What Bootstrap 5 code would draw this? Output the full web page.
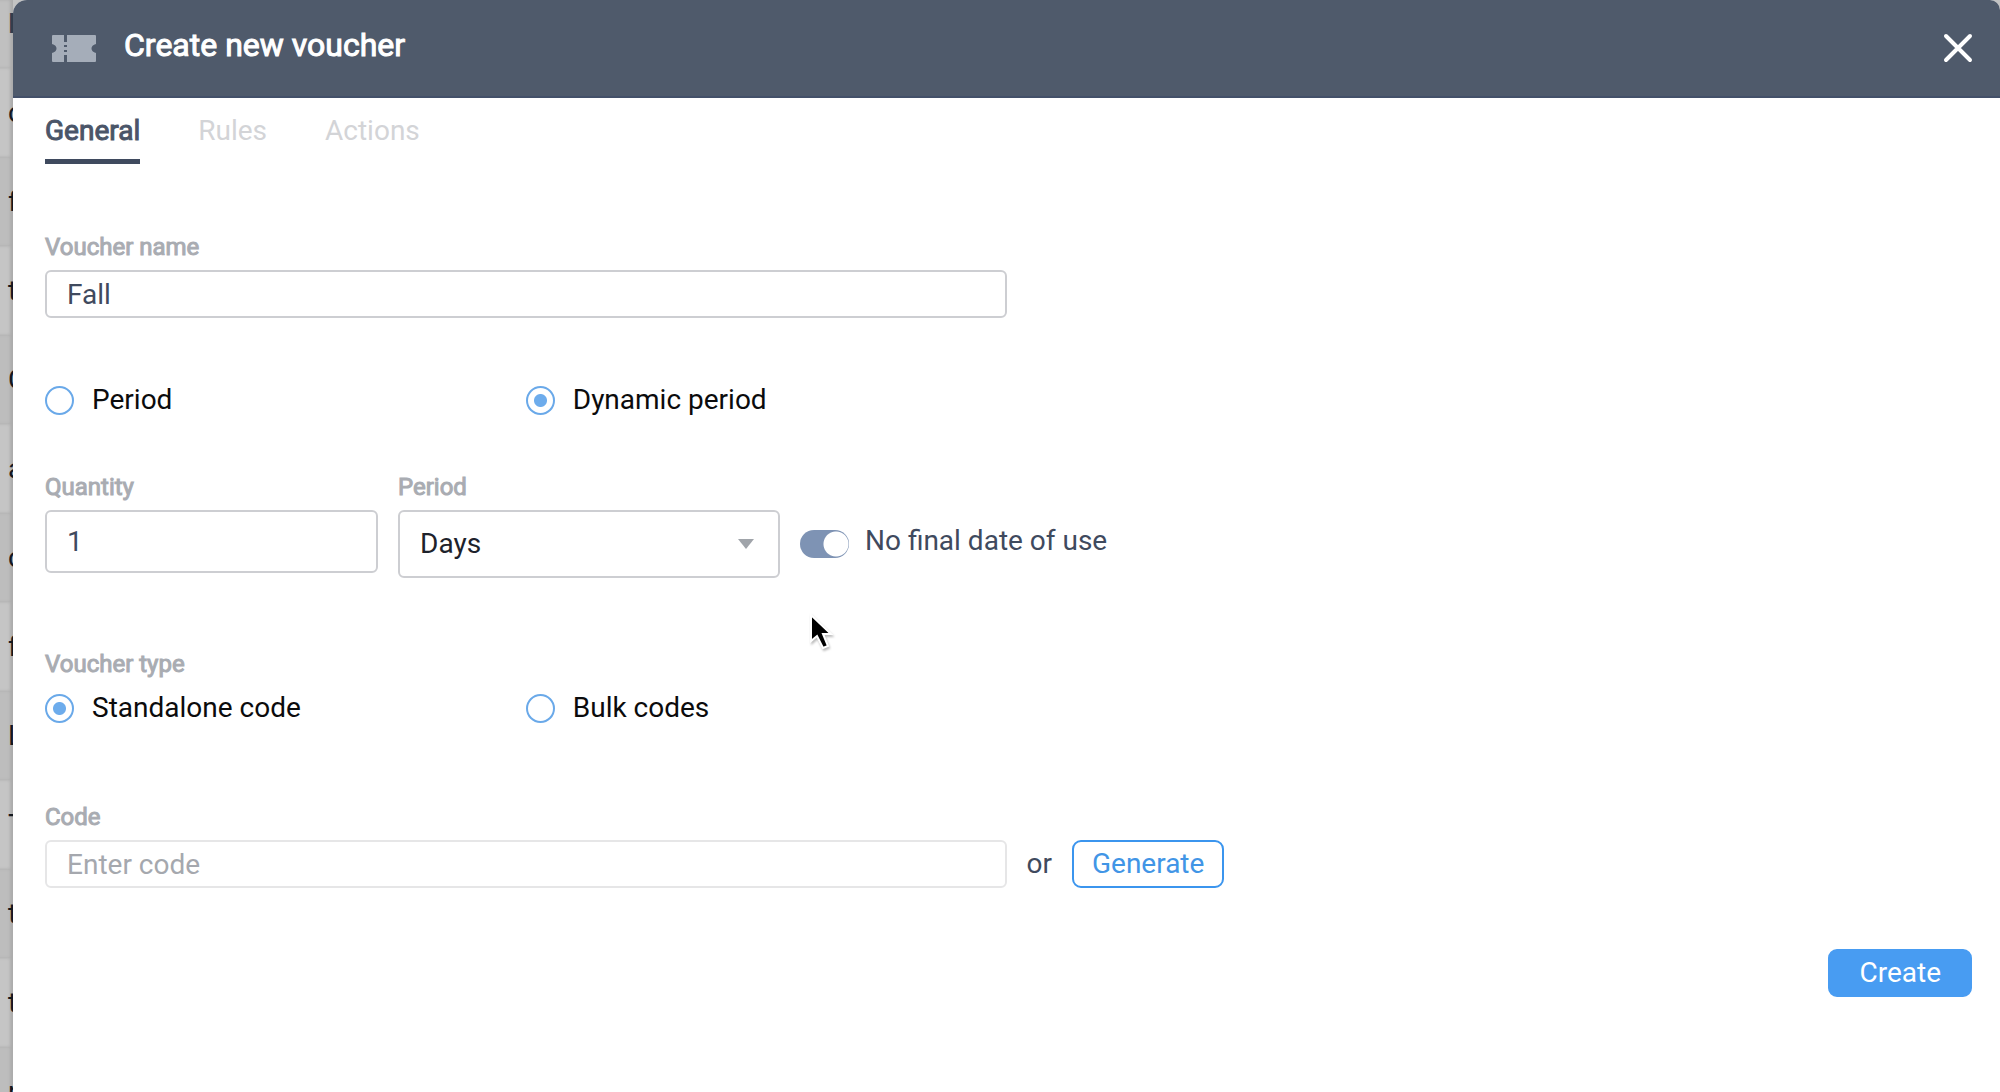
<!DOCTYPE html>
<html lang="en">
<head>
<meta charset="utf-8">
<meta name="viewport" content="width=device-width, initial-scale=1">
<title>Create new voucher</title>
<link href="https://cdn.jsdelivr.net/npm/bootstrap@5.3.0/dist/css/bootstrap.min.css" rel="stylesheet">
<style>
  body { font-family: Roboto, "Liberation Sans", sans-serif; font-size: 28px; font-weight: 375; line-height: 36px; color: #3f4a5e; background: #c3c3c3; }
  .page-shell { min-height: 100vh; }
  /* Sliver of the table behind the dialog */
  .backdrop-list { width: 13px; position: relative; color: #14181f; }
  .backdrop-rows { position: absolute; inset: 0; overflow: hidden; box-shadow: inset -3px 0 3px #a9a9a9; }
  .backdrop-rows div { height: 89px; line-height: 89px; padding-left: 8px; background: #bdbdbd; box-shadow: inset -3px 0 3px #acacac; }
  .backdrop-rows div:nth-child(even) { background: #c5c5c5; }
  .backdrop-rows .list-head { height: 68px; line-height: 32px; background: #c0c0c0; font-weight: 500; color: #333d4d; }
  .dialog { min-width: 0; background: #fff; border-radius: 14px 10px 0 0; overflow: hidden; }
  .dialog-head { height: 98px; padding: 0 27px 0 39px; background: #4f5a6b; border-bottom: 2px solid #435069; }
  .dialog-head h1 { font-size: 32px; line-height: 40px; font-weight: 400; color: #fff; margin: 0 0 6px 28px; -webkit-text-stroke: 1px #fff; }
  .close-btn { background: none; border: 0; padding: 0; line-height: 0; }
  .dialog-body { padding: 15px 32px 32px; }
  .tab-row { gap: 58px; }
  .tab-row .nav-link { padding: 0 0 10px; color: #d3d4d7; border-bottom: 5px solid transparent; }
  .tab-row .nav-link.active { color: #4a5568; font-weight: 400; -webkit-text-stroke: 1px #4a5568; border-bottom-color: #3f4a5e; }
  .field-label { display: block; font-size: 24px; line-height: 30px; font-weight: 400; -webkit-text-stroke: 1px #a9acb2; color: #a9acb2; margin: 0 0 8px; }
  .field-box { height: 48px; padding: 0 20px; font-size: 28px; font-weight: 375; color: #3f4a5e; border: 2px solid #cdced2; border-radius: 6px; }
  .field-box::placeholder { color: #a5a8ae; }
  .field-code { border-color: #e6e6e7; }
  .field-tall { height: 63px; }
  .field-select { height: 68px; color: #1d222b; background: #fff url("data:image/svg+xml,%3Csvg xmlns='http://www.w3.org/2000/svg' viewBox='0 0 16 10'%3E%3Cpath d='M0 0h16L8 10z' fill='%23a0a4aa'/%3E%3C/svg%3E") no-repeat right 24px center / 16px 10px; }
  .w-quantity { flex: 0 1 333px; }
  .w-period { flex: 0 1 382px; }
  .choice { display: flex; align-items: center; gap: 18px; padding: 0; margin: 0; min-height: 36px; color: #0b0b0c; }
  .choice .form-check-input { float: none; flex: none; width: 29px; height: 29px; margin: 0; border: 2px solid #6aa9e9; background: #fff; }
  .choice .form-check-input:checked { border-color: #6aa9e9; background: radial-gradient(circle, #6dacec 6px, #fff 7px); }
  .switch-row { height: 68px; gap: 16px; padding: 0; }
  .switch-row .form-check-input { float: none; flex: none; width: 49px; height: 28px; margin: 0; border: 0; border-radius: 14px;
    background: radial-gradient(circle at 36px 14px, #fff 12px, #7e93b4 13px); }
  .switch-row label { margin-bottom: 6px; }
  .btn-voucher { height: 48px; padding: 0 18px; font-size: 28px; font-weight: 375; line-height: 42px; border: 2px solid #3b95ee; border-radius: 9px; color: #4195e6; background: #fff; }
  .btn-create { padding: 0 29px; color: #fff; background: #489cf2; border-color: #489cf2; }
  .sec-name { margin-top: 68px; }
  .sec-choice { margin-top: 64px; }
  .sec-period { margin-top: 54px; }
  .sec-type { margin-top: 71px; }
  .sec-type .field-label { margin-bottom: 11px; }
  .sec-code { margin-top: 76px; }
  .actions { margin-top: 61px; margin-right: -4px; }
  .pointer { position: absolute; left: 808px; top: 612px; pointer-events: none; filter: drop-shadow(1px 2px 1px #0004); }
</style>
</head>
<body>
<div class="page-shell d-flex position-relative">
  <div class="backdrop-list flex-shrink-0" aria-hidden="true">
    <div class="backdrop-rows">
      <div class="list-head pt-2">N</div>
      <div>c</div><div>f</div><div>t</div><div>C</div><div>a</div><div>c</div><div>f</div><div>L</div><div>T</div><div>t</div><div>t</div><div>r</div>
    </div>
  </div>
  <main class="dialog flex-grow-1">
    <header class="dialog-head d-flex align-items-center">
      <svg width="44" height="27" viewBox="0 0 44 27" fill="#a5adb9" aria-hidden="true">
        <path d="M1 0h42a1 1 0 0 1 1 1v8c-6 1-6 8 0 9v8a1 1 0 0 1-1 1H1a1 1 0 0 1-1-1v-8c6-1 6-8 0-9V1a1 1 0 0 1 1-1z"/>
        <path d="M12 0h3v7h-3zM12 10h3v2h-3zM12 15h3v2h-3zM12 20h3v7h-3z" fill="#4f5a6b"/>
      </svg>
      <h1>Create new voucher</h1>
      <button class="close-btn ms-auto" type="button" aria-label="Close">
        <svg width="30" height="30" viewBox="0 0 30 30" stroke="#fff" stroke-width="4" stroke-linecap="round"><path d="M3 3l24 24M27 3L3 27"/></svg>
      </button>
    </header>
    <form class="dialog-body">
      <nav class="nav tab-row">
        <a class="nav-link active" href="#">General</a>
        <a class="nav-link" href="#">Rules</a>
        <a class="nav-link" href="#">Actions</a>
      </nav>

      <div class="row g-0 sec-name">
        <div class="col-6">
          <label class="field-label" for="vname">Voucher name</label>
          <input class="form-control field-box" id="vname" type="text" value="Fall">
        </div>
      </div>

      <div class="row g-0 sec-choice">
        <div class="col-3"><div class="form-check choice">
          <input class="form-check-input" type="radio" name="period" id="p1"><label for="p1">Period</label>
        </div></div>
        <div class="col-3"><div class="form-check choice">
          <input class="form-check-input" type="radio" name="period" id="p2" checked><label for="p2">Dynamic period</label>
        </div></div>
      </div>

      <div class="d-flex sec-period">
        <div class="w-quantity me-3">
          <label class="field-label" for="qty">Quantity</label>
          <input class="form-control field-box field-tall" id="qty" type="text" value="1">
        </div>
        <div class="w-period ms-1 me-3">
          <label class="field-label" for="unit">Period</label>
          <select class="form-select field-box field-select" id="unit"><option>Days</option></select>
        </div>
        <div class="form-check form-switch switch-row d-flex align-items-center align-self-end ms-1 mb-0">
          <input class="form-check-input" type="checkbox" role="switch" id="nofinal" checked>
          <label for="nofinal">No final date of use</label>
        </div>
      </div>

      <div class="sec-type">
        <div class="field-label">Voucher type</div>
        <div class="row g-0">
          <div class="col-3"><div class="form-check choice">
            <input class="form-check-input" type="radio" name="vtype" id="t1" checked><label for="t1">Standalone code</label>
          </div></div>
          <div class="col-3"><div class="form-check choice">
            <input class="form-check-input" type="radio" name="vtype" id="t2"><label for="t2">Bulk codes</label>
          </div></div>
        </div>
      </div>

      <div class="sec-code">
        <label class="field-label" for="code">Code</label>
        <div class="d-flex align-items-center">
          <div class="w-50"><input class="form-control field-box field-code" id="code" type="text" placeholder="Enter code"></div>
          <span class="px-3 ms-1">or</span>
          <button class="btn btn-voucher ms-1" type="button">Generate</button>
        </div>
      </div>

      <div class="d-flex justify-content-end actions">
        <button class="btn btn-voucher btn-create" type="submit">Create</button>
      </div>
    </form>
  </main>
  <svg class="pointer" width="26" height="40" viewBox="0 0 26 40" aria-hidden="true">
    <path d="M3 3v26l6-5 6 12 5-2-5-12h8z" fill="#000" stroke="#fff" stroke-width="2"/>
  </svg>
</div>
<script src="https://cdn.jsdelivr.net/npm/bootstrap@5.3.0/dist/js/bootstrap.bundle.min.js"></script>
</body>
</html>
